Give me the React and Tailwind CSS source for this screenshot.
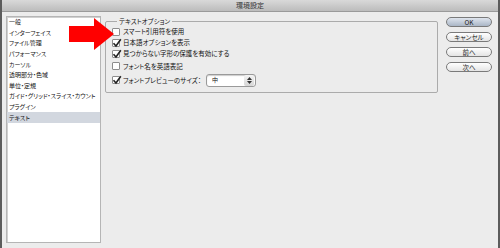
import React from 'react';

const categories = [
  '一般',
  'インターフェイス',
  'ファイル管理',
  'パフォーマンス',
  'カーソル',
  '透明部分・色域',
  '単位・定規',
  'ガイド・グリッド・スライス・カウント',
  'プラグイン',
  'テキスト',
];

const options = [
  { label: 'スマート引用符を使用', checked: false, h: 'h-[11px]' },
  { label: '日本語オプションを表示', checked: true, h: 'h-[11px]' },
  { label: '見つからない字形の保護を有効にする', checked: true, h: 'h-[11px]' },
  { label: 'フォント名を英語表記', checked: false, h: 'h-[14px]' },
];

const Check = ({ checked }) => (
  <span className="w-[8px] h-[8px] shrink-0 bg-white border border-[#8d8d8d] rounded-[1px] relative">
    {checked && (
      <svg className="absolute left-[-1px] top-[-2px]" width="10" height="10" viewBox="0 0 10 10">
        <path d="M1.5 5.2 L4 8 L8.8 1.2" fill="none" stroke="#222" strokeWidth="1.6" />
      </svg>
    )}
  </span>
);

const Pill = ({ children, primary }) => (
  <button
    className={
      'w-[46px] h-[10px] rounded-full border border-[#7a7a7a] text-[6.5px] leading-none text-[#222] flex items-center justify-center ' +
      (primary ? 'bg-gradient-to-b from-[#dfe5ee] to-[#aab6c6]' : 'bg-gradient-to-b from-white to-[#e4e4e4]')
    }
  >
    {children}
  </button>
);

export default function App() {
  return (
    <div
      className="w-[500px] h-[248px] bg-[#ececec] border-x-2 border-[#5c5c5c] relative overflow-hidden text-[#111] [font-feature-settings:'palt']"
      style={{ fontFamily: '"Noto Sans CJK JP", "Liberation Sans", sans-serif' }}
    >
      {/* title bar */}
      <div className="h-[12px] bg-gradient-to-b from-[#d9d9d9] to-[#bcbcbc] border-b border-[#9a9a9a] flex items-center justify-center text-[7px] leading-none text-[#333]">
        環境設定
      </div>

      <div className="flex items-start">
        {/* category list */}
        <div className="ml-[4px] mt-[4px] w-[95px] h-[227px] bg-white border border-[#b5b5b5] shadow-[inset_1px_1px_0_#d0d0d0]">
          {categories.map((c, i) => (
            <div
              key={c}
              className={
                'h-[10.6px] pl-[2px] flex items-center text-[6px] leading-none whitespace-nowrap ' +
                (i === categories.length - 1 ? 'bg-[#d2d7df]' : '')
              }
            >
              {c}
            </div>
          ))}
        </div>

        {/* options group */}
        <fieldset className="ml-[4px] mt-[5px] w-[333px] border border-[#ababab] rounded-[2px] pl-[6px] pb-[5px]">
          <legend className="ml-[5px] px-[2px] h-[9px] text-[6.5px] leading-[9px]">テキストオプション</legend>
          {options.map((o) => (
            <div key={o.label} className={o.h + ' flex items-center gap-[3px] text-[6.5px] leading-none'}>
              <Check checked={o.checked} />
              <span>{o.label}</span>
            </div>
          ))}
          <div className="h-[14px] flex items-center gap-[3px] text-[6.5px] leading-none">
            <Check checked />
            <span>フォントプレビューのサイズ：</span>
            <div className="ml-[2px] w-[50px] h-[13px] bg-white border border-[#9a9a9a] rounded-[3px] flex items-center justify-between pl-[5px] pr-[1px] shadow-[inset_0_1px_1px_#ccc]">
              <span className="text-[6px]">中</span>
              <span className="w-[10px] h-[11px] rounded-[2px] bg-gradient-to-b from-[#f4f4f4] to-[#d6d6d6] flex flex-col items-center justify-center gap-[1px]">
                <svg width="5" height="3" viewBox="0 0 5 3"><path d="M0 3 L2.5 0 L5 3 Z" fill="#333" /></svg>
                <svg width="5" height="3" viewBox="0 0 5 3"><path d="M0 0 L2.5 3 L5 0 Z" fill="#333" /></svg>
              </span>
            </div>
          </div>
        </fieldset>

        {/* buttons */}
        <div className="ml-[8px] mt-[5px] flex flex-col gap-[5px]">
          <Pill primary>OK</Pill>
          <Pill>キャンセル</Pill>
          <Pill>前へ</Pill>
          <Pill>次へ</Pill>
        </div>
      </div>

      {/* red arrow annotation */}
      <svg className="absolute left-[67px] top-[18px]" width="46" height="33" viewBox="0 0 46 33">
        <path d="M0 8 L25 8 L25 0 L45 16 L25 32 L25 24 L0 24 Z" fill="#f00" />
      </svg>
    </div>
  );
}
